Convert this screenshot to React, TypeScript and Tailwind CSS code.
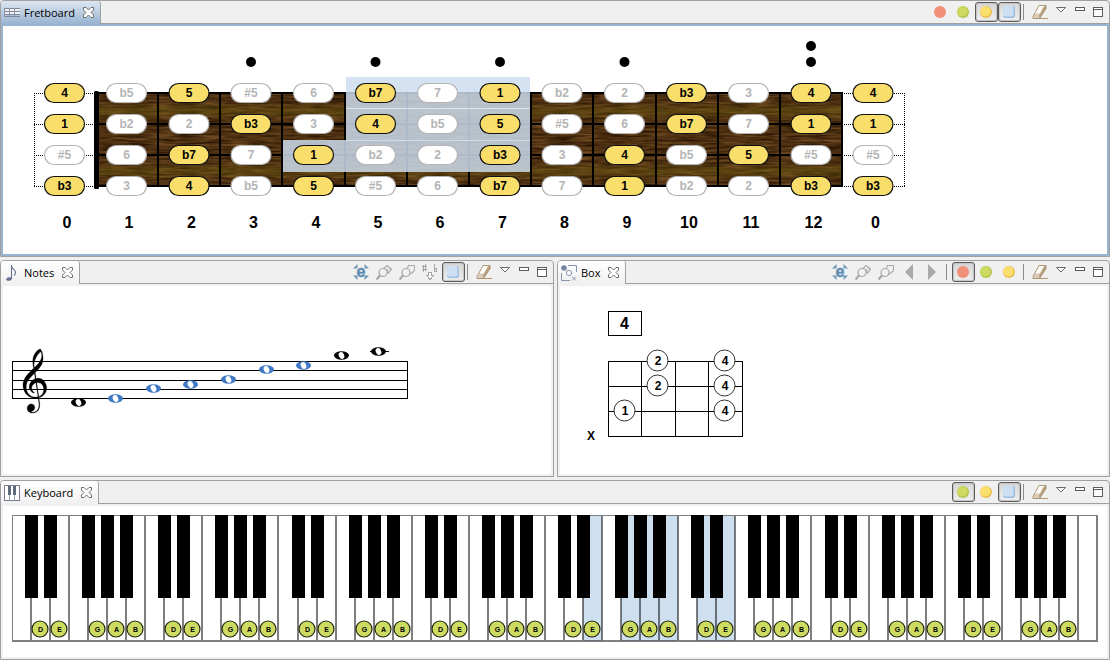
import type { ReactNode } from "react";

/* ---------- icons ---------- */

function Icon({ children, crisp = true }: { children: ReactNode; crisp?: boolean }) {
  return (
    <svg width="16" height="16" viewBox="0 0 16 16" fill="none" aria-hidden="true" shapeRendering={crisp ? "crispEdges" : "auto"} className="shrink-0">
      {children}
    </svg>
  );
}

const RedDot = () => (
  <Icon crisp={false}>
    <circle cx="8" cy="8" r="6" fill="#f09078" />
  </Icon>
);

function ShadedDot({ fill, shade }: { fill: string; shade: string }) {
  return (
    <Icon crisp={false}>
      <circle cx="8" cy="8" r="6" fill={shade} />
      <circle cx="7.4" cy="7.4" r="5.2" fill={fill} />
    </Icon>
  );
}
const GreenDot = () => <ShadedDot fill="#cedb62" shade="#b5c14c" />;
const YellowDot = () => <ShadedDot fill="#fadf6c" shade="#e6bd50" />;

const BlueSquare = () => (
  <Icon crisp={false}>
    <rect x="2" y="2" width="12" height="12" rx="2.5" fill="#9dbfe0" />
    <rect x="2" y="2" width="10.5" height="10.5" rx="2" fill="#cde0f3" />
  </Icon>
);

const Eraser = () => (
  <Icon crisp={false}>
    <path d="M7 1.500h7L9 10.500H3z" fill="#fdfbf6" />
    <path d="M3 9.500h6.500L7.500 14.500H1z" fill="#dccbb8" />
    <path d="M11.500 3 14 1.500V4.500l-6.500 10L7 11.500z" fill="#b8a07e" />
    <path d="M7 1.500h7V4.500L7.500 14.500H1V12.500z" stroke="#a38c6a" strokeWidth=".9" />
    <path d="M6.500 14.500H16" stroke="#b49770" />
  </Icon>
);

const ViewMenu = () => (
  <Icon crisp={false}>
    <path d="M2.500 3.500h9L7 8z" fill="#fff" stroke="#6a6a6a" />
  </Icon>
);
const Minimize = () => (
  <Icon>
    <rect x="3.500" y="3.500" width="9" height="3" fill="#fff" stroke="#5c5c5c" />
  </Icon>
);
const Maximize = () => (
  <Icon>
    <rect x="3.500" y="3.500" width="9" height="9" fill="#fff" stroke="#5c5c5c" />
    <path d="M3 5.500h10" stroke="#5c5c5c" />
  </Icon>
);

const LinkEditor = () => (
  <Icon crisp={false}>
    <path d="M0 4.500 4.500 4.500 4.500 0zM16 4.500h-4.500V0zM0 11.500h4.500V16zM16 11.500h-4.500V16z" fill="#7298b6" />
    <text x="8" y="12.500" textAnchor="middle" fontFamily="Liberation Sans, sans-serif" fontWeight="bold" fontSize="16" fill="#5e8cb2" stroke="#5e8cb2" strokeWidth=".4">e</text>
  </Icon>
);

const SearchKey = () => (
  <Icon crisp={false}>
    <circle cx="7" cy="8.500" r="4" stroke="#a6a6a6" strokeWidth="1.200" />
    <path d="M4 11.500.5 15.500" stroke="#a6a6a6" strokeWidth="2.200" />
    <path d="M8 4.500 11 1.500l4.500 3.500-3 4-1.500-1.500M11.500 2l3 2.500v2M11 5l1.500 2" stroke="#ababab" strokeWidth="1.200" />
  </Icon>
);
const SearchShape = () => (
  <Icon crisp={false}>
    <circle cx="7" cy="8.500" r="4" stroke="#a6a6a6" strokeWidth="1.200" />
    <path d="M4 11.500.5 15.500" stroke="#a6a6a6" strokeWidth="2.200" />
    <path d="M8.500 4 9.500 1.500h6v5l-2.500 2.500-2 1" stroke="#ababab" strokeWidth="1.200" />
  </Icon>
);
const Accidentals = () => (
  <Icon>
    <path d="M1.500 1v7M3.500 0v7M0 2.500h5M0 5.500h5M12.500 0v8M12.500 7.500h2v-3h-2" stroke="#a6a6a6" />
    <path d="M6.500 8.500h3v3h2l-3.500 4-3.500-4h2z" fill="#fff" stroke="#a6a6a6" />
  </Icon>
);
const PrevArrow = () => (
  <Icon crisp={false}>
    <path d="M12 0v16L4 8z" fill="#a9a9a9" />
  </Icon>
);
const NextArrow = () => (
  <Icon crisp={false}>
    <path d="M4 0v16L12 8z" fill="#a9a9a9" />
  </Icon>
);

const FretboardIcon = () => (
  <Icon>
    <path d="M0 3.500h16M0 6.500h16M0 9.500h16M0 11.500h16" stroke="#7f8799" />
    <path d="M.5 3v9M5.500 3v9M10.500 3v9" stroke="#8d93a3" />
    <path d="M1 4h4v2H1zM6 4h4v2H6zM11 4h5v2h-5zM1 7h4v2H1zM6 7h4v2H6zM11 7h5v2h-5z" fill="#eef1f6" />
  </Icon>
);
const NoteIcon = () => (
  <Icon crisp={false}>
    <ellipse cx="5" cy="14" rx="2.800" ry="1.700" fill="#66708f" transform="rotate(-15 5 14)" />
    <path d="M7.500 14V0M7.500 1c.5 3 4 3.500 4 6.500 0 1.300-.5 2.200-1.500 3" stroke="#66708f" strokeWidth="1.100" />
  </Icon>
);
const BoxIcon = () => (
  <Icon crisp={false}>
    <path d="M7 .5h8.500V7M.5 8v7.500H9" stroke="#8a94b0" />
    <circle cx="3" cy="3" r="2.800" fill="#7883a3" />
    <circle cx="8" cy="8" r="2.600" fill="#fff" stroke="#8a94b0" />
    <path d="M5.500 5.500 4 4M11 11.500l4 4M15 11.500l-4 4" stroke="#8a94b0" />
  </Icon>
);
const KeyboardIcon = () => (
  <Icon>
    <rect x=".5" y=".5" width="15" height="15" fill="#fff" stroke="#76818f" />
    <path d="M5.500 10v5M10.500 10v5" stroke="#9aa3af" />
    <path d="M4 1h3v9H4zM9 1h3v9H9z" fill="#5f6b7a" />
  </Icon>
);
const CloseIcon = () => (
  <svg width="11" height="11" viewBox="0 0 11 11" aria-hidden="true">
    <path d="M.5.5H3l2.500 2.500L8 .5h2.500V3L8 5.500 10.500 8v2.500H8L5.500 8 3 10.500H.5V8L3 5.500.5 3z" fill="#fff" stroke="#6d6d6d" />
  </svg>
);

/* ---------- window parts ---------- */

type Tool =
  | { kind: "separator" }
  | { kind: "button"; label: string; icon: ReactNode; pressed?: boolean };

const tool = (label: string, icon: ReactNode, pressed = false): Tool => ({ kind: "button", label, icon, pressed });
const separator: Tool = { kind: "separator" };

function ToolButton({ label, icon, pressed }: { label: string; icon: ReactNode; pressed?: boolean }) {
  return (
    <button
      type="button"
      aria-label={label}
      aria-pressed={pressed}
      className={
        "flex h-5 w-[23px] items-center rounded-[3px] border pl-[2px] " +
        (pressed
          ? "border-[#5a5a5a] bg-linear-to-b from-[#d6d6d6] to-[#efefef] shadow-[inset_0_0_1px_1px_#c4c4c4]"
          : "border-transparent")
      }
    >
      {icon}
    </button>
  );
}

function Panel({ title, icon, tools, active = false, children }: { title: string; icon: ReactNode; tools: Tool[]; active?: boolean; children: ReactNode }) {
  return (
    <section className="min-w-0 overflow-hidden rounded-t-[4px] border border-[#a0a0a0] bg-[#f0f0f0]">
      <header className="flex h-[23px]">
        <div
          className={
            "flex items-center rounded-tr-[3px] border-r border-[#a0a0a0] pr-[6px] pl-[3px] " +
            (active ? "bg-linear-to-b from-[#dde7f2] to-[#99b4d1]" : "bg-linear-to-b from-white to-[#f0f0f0]")
          }
        >
          <button type="button" className="flex items-center gap-1 text-[11px] leading-4 text-black">
            {icon}
            {title}
          </button>
          <button type="button" aria-label={"Close " + title} className="ml-2">
            <CloseIcon />
          </button>
        </div>
        <div className="flex flex-1 items-center justify-end border-b border-[#a0a0a0] pr-[2px]">
          {tools.map((t, i) =>
            t.kind === "separator" ? (
              <span key={i} className="flex w-2 pl-[2px]">
                <span className="h-4 w-px bg-[#8c8c8c]" />
              </span>
            ) : (
              <ToolButton key={i} label={t.label} icon={t.icon} pressed={t.pressed} />
            ),
          )}
          <button type="button" aria-label="View menu" className="flex w-[19px] justify-center"><ViewMenu /></button>
          <button type="button" aria-label="Minimize" className="flex w-[18px] justify-center"><Minimize /></button>
          <button type="button" aria-label="Maximize" className="flex w-[18px] justify-center"><Maximize /></button>
        </div>
      </header>
      <div className={"p-[2px] " + (active ? "bg-[#99b4d1]" : "bg-[#f0f0f0]")}>
        <div className="overflow-hidden bg-white">{children}</div>
      </div>
    </section>
  );
}

/* ---------- fretboard ---------- */

const STRINGS = [
  ["4", "b5", "5", "#5", "6", "b7", "7", "1", "b2", "2", "b3", "3", "4", "4"],
  ["1", "b2", "2", "b3", "3", "4", "b5", "5", "#5", "6", "b7", "7", "1", "1"],
  ["#5", "6", "b7", "7", "1", "b2", "2", "b3", "3", "4", "b5", "5", "#5", "#5"],
  ["b3", "3", "4", "b5", "5", "#5", "6", "b7", "7", "1", "b2", "2", "b3", "b3"],
];
const IN_SCALE = new Set(["1", "b3", "4", "5", "b7"]);
const FRET_STEP = 62.2;
const fretCenter = (i: number) => Math.round((64.5 + FRET_STEP * i) * 2) / 2;
const fretLine = (i: number) => Math.round(95.8 + FRET_STEP * i);
const stringY = (s: number) => 93 + 31 * s;
const INLAYS = [[3, 62], [5, 62], [7, 62], [9, 62], [12, 62], [12, 46]];

function Fretboard() {
  return (
    <svg width="1104" height="228" viewBox="3 26 1104 228" className="block" role="img" aria-label="Fretboard" fontFamily="Liberation Sans, Arial, sans-serif" fontWeight="bold" textAnchor="middle">
      <defs>
        <filter id="grain" x="0" y="0" width="1" height="1" colorInterpolationFilters="sRGB">
          <feTurbulence type="fractalNoise" baseFrequency="0.04 0.45" numOctaves="3" seed="4" />
          <feColorMatrix values=".45 0 0 0 .08  .34 0 0 0 .02  .2 0 0 0 -.03  0 0 0 0 1" />
        </filter>
        <linearGradient id="bands" x1="0" y1="93" x2="0" y2="153" gradientUnits="userSpaceOnUse" spreadMethod="repeat">
          <stop offset="0" stopColor="#6b5a10" stopOpacity="0" />
          <stop offset=".15" stopColor="#6b5a10" stopOpacity="0" />
          <stop offset=".3" stopColor="#6b5a10" stopOpacity=".5" />
          <stop offset=".45" stopColor="#6b5a10" stopOpacity="0" />
          <stop offset="1" stopColor="#6b5a10" stopOpacity="0" />
        </linearGradient>
      </defs>
      <rect x="97" y="93" width="745" height="93" filter="url(#grain)" />
      <rect x="97" y="93" width="745" height="93" fill="url(#bands)" />

      <g shapeRendering="crispEdges">
        {[0, 1, 2, 3].map((s) => (
          <g key={s}>
            <rect x="97" y={stringY(s) - 1} width="746" height={2} />
            <path d={`M34 ${stringY(s) + 0.5}H95M844 ${stringY(s) + 0.5}H905`} stroke="#000" strokeDasharray="1 1" />
          </g>
        ))}
        {Array.from({ length: 12 }, (_, i) => (
          <rect key={i} x={fretLine(i + 1) - 1} y="92" width="2" height="95" />
        ))}
        <path d="M34.500 93V187M904.500 93V187" stroke="#000" strokeDasharray="1 1" />
        <g fill="#cdddee" fillOpacity=".84">
          <rect x="346" y="77" width="184" height="31" />
          <rect x="346" y="109" width="184" height="31" />
          <rect x="283" y="140" width="247" height="32" />
        </g>
        <rect x="346" y="108" width="184" height="1" fill="#dbe6f1" />
        <rect x="346" y="140" width="184" height="1" fill="#cfdce8" />
      </g>
      <rect x="94" y="91" width="5" height="98" rx="1.500" />

      {INLAYS.map(([fret, y]) => (
        <circle key={`${fret}-${y}`} cx={fretCenter(fret)} cy={y} r="5" />
      ))}

      {STRINGS.map((notes, s) =>
        notes.map((note, f) => {
          const on = IN_SCALE.has(note);
          const x = fretCenter(f);
          return (
            <g key={`${s}-${f}`}>
              <rect x={x - 20} y={stringY(s) - 9.5} width="40" height="19" rx="9.500" fill={on ? "#fade6c" : "#fff"} stroke={on ? "#111" : "#b4b4b4"} strokeWidth="1.200" />
              <text x={x} y={stringY(s) + 4} fontSize="12" fill={on ? "#000" : "#b4b4b4"}>{note}</text>
            </g>
          );
        }),
      )}
      {STRINGS[0].map((_, i) => (
        <text key={i} x={fretCenter(i) + 2.5} y="228" fontSize="16">{i === 13 ? 0 : i}</text>
      ))}
    </svg>
  );
}

/* ---------- staff ---------- */

const STAFF_NOTES = [
  { x: 78.5, y: 402.5, on: false },
  { x: 115.5, y: 398.5, on: true },
  { x: 153.5, y: 388.5, on: true },
  { x: 190.5, y: 384.5, on: true },
  { x: 228.5, y: 379.5, on: true },
  { x: 266.5, y: 369.5, on: true },
  { x: 303.5, y: 365.5, on: true },
  { x: 341.5, y: 355.5, on: false },
  { x: 378.5, y: 351.5, on: false },
];

const CLEF =
  "m12.049 3.5296c0.305 3.1263-2.019 5.6563-4.0772 7.7014-0.9349 0.897-0.155 0.148-0.6437 0.594-0.1022-0.479-0.2986-1.731-0.2802-2.11 0.1304-2.6939 2.3198-6.5875 4.2381-8.0236 0.309 0.5767 0.563 0.6231 0.763 1.8382zm0.651 16.142c-1.232-0.906-2.85-1.144-4.3336-0.885-0.1913-1.255-0.3827-2.51-0.574-3.764 2.3506-2.329 4.9066-5.0322 5.0406-8.5394 0.059-2.232-0.276-4.6714-1.678-6.4836-1.7004 0.12823-2.8995 2.156-3.8019 3.4165-1.4889 2.6705-1.1414 5.9169-0.57 8.7965-0.8094 0.952-1.9296 1.743-2.7274 2.734-2.3561 2.308-4.4085 5.43-4.0046 8.878 0.18332 3.334 2.5894 6.434 5.8702 7.227 1.2457 0.315 2.5639 0.346 3.8241 0.099 0.2199 2.25 1.0266 4.629 0.0925 6.813-0.7007 1.598-2.7875 3.004-4.3325 2.192-0.5994-0.316-0.1137-0.051-0.478-0.252 1.0698-0.257 1.9996-1.036 2.26-1.565 0.8378-1.464-0.3998-3.639-2.1554-3.358-2.262 0.046-3.1904 3.14-1.7356 4.685 1.3468 1.52 3.833 1.312 5.4301 0.318 1.8125-1.18 2.0395-3.544 1.8325-5.562-0.07-0.678-0.403-2.67-0.444-3.387 0.697-0.249 0.209-0.059 1.193-0.449 2.66-1.053 4.357-4.259 3.594-7.122-0.318-1.469-1.044-2.914-2.302-3.792zm0.561 5.757c0.214 1.991-1.053 4.321-3.079 4.96-0.136-0.795-0.172-1.011-0.2626-1.475-0.4822-2.46-0.744-4.987-1.116-7.481 1.6246-0.168 3.4576 0.543 4.0226 2.184 0.244 0.577 0.343 1.197 0.435 1.812zm-5.1486 5.196c-2.5441 0.141-4.9995-1.595-5.6343-4.081-0.749-2.153-0.5283-4.63 0.8207-6.504 1.1151-1.702 2.6065-3.105 4.0286-4.543 0.183 1.127 0.366 2.254 0.549 3.382-2.9906 0.782-5.0046 4.725-3.215 7.451 0.5324 0.764 1.9765 2.223 2.7655 1.634-1.102-0.683-2.0033-1.859-1.8095-3.227-0.0821-1.282 1.3699-2.911 2.6513-3.198 0.4384 2.869 0.9413 6.073 1.3797 8.943-0.5054 0.1-1.0211 0.143-1.536 0.143z";

function Staff() {
  return (
    <svg width="548" height="188" viewBox="3 286 548 188" className="block" role="img" aria-label="Notes">
      <path d="M12 361.500H408M12 370.500H408M12 380.500H408M12 389.500H408M12 398.500H408M12.500 361V399M407.500 361V399M370 351.500H389" stroke="#000" fill="none" shapeRendering="crispEdges" />
      <path d={CLEF} transform="translate(23 349) scale(1.560 1.570)" stroke="#000" strokeWidth=".2" />
      {STAFF_NOTES.map(({ x, y, on }) => (
        <g key={x}>
          <ellipse cx={x} cy={y} rx="7.500" ry="4.200" fill={on ? "#3f78c4" : "#000"} />
          <ellipse cx={x} cy={y} rx="2.700" ry="3.500" fill="#fff" transform={`rotate(-24 ${x} ${y})`} />
        </g>
      ))}
    </svg>
  );
}

/* ---------- box diagram ---------- */

const FINGERS = [
  { x: 657.5, y: 360.5, n: 2 },
  { x: 724.5, y: 360.5, n: 4 },
  { x: 657.5, y: 385.5, n: 2 },
  { x: 724.5, y: 385.5, n: 4 },
  { x: 624.5, y: 410.5, n: 1 },
  { x: 724.5, y: 410.5, n: 4 },
];

function BoxDiagram() {
  return (
    <svg width="547" height="188" viewBox="560 286 547 188" className="block" role="img" aria-label="Box" fontFamily="Liberation Sans, Arial, sans-serif" fontWeight="bold" textAnchor="middle">
      <g stroke="#000" fill="none" shapeRendering="crispEdges">
        <rect x="608.500" y="311.500" width="33" height="24" />
        <path d="M608 361.500H743M608 386.500H743M608 411.500H743M608 436.500H743M608.500 361V437M641.500 361V437M675.500 361V437M708.500 361V437M742.500 361V437" />
      </g>
      <text x="624.500" y="329" fontSize="16">4</text>
      {FINGERS.map(({ x, y, n }) => (
        <g key={`${x}-${y}`}>
          <circle cx={x} cy={y} r="10.500" fill="#fff" stroke="#333" />
          <text x={x + 0.5} y={y + 4.5} fontSize="12">{n}</text>
        </g>
      ))}
      <text x="591" y="440" fontSize="12">X</text>
    </svg>
  );
}

/* ---------- keyboard ---------- */

const WHITE_KEYS = 57;
const keyX = (i: number) => Math.round(12 + (1085 / WHITE_KEYS) * i);
const SELECTED_KEYS = [30, 32, 33, 34, 36, 37];
const NOTE_NAMES = ["C", "D", "E", "F", "G", "A", "B"];
const MARKED = new Set(["D", "E", "G", "A", "B"]);

function Keyboard() {
  const keys = Array.from({ length: WHITE_KEYS }, (_, i) => i);
  return (
    <svg viewBox="3 506 1104 151" className="block h-auto w-full" role="img" aria-label="Keyboard" fontFamily="Liberation Sans, Arial, sans-serif" fontWeight="bold" textAnchor="middle">
      <g shapeRendering="crispEdges">
        {SELECTED_KEYS.map((i) => (
          <rect key={i} x={keyX(i)} y="516" width={keyX(i + 1) - keyX(i)} height="125" fill="#cedff0" />
        ))}
        <g fill="#000" fillOpacity=".5">
          <rect x="12" y="515" width="1086" height="1" />
          <rect x="12" y="516" width="1" height="124" />
          <rect x="12" y="640" width="1086" height="2" />
          {keys.map((i) => (
            <rect key={i} x={keyX(i + 1) - 1} y="516" width="2" height="124" />
          ))}
        </g>
        {keys
          .filter((i) => i > 0 && ![0, 3].includes(i % 7))
          .map((i) => (
            <rect key={i} x={keyX(i) - 6} y="515" width="13" height="83" />
          ))}
      </g>
      {keys
        .filter((i) => MARKED.has(NOTE_NAMES[i % 7]))
        .map((i) => (
          <g key={i}>
            <circle cx={keyX(i) + 9} cy="629" r="8" fill="#cedb62" stroke="#23260c" strokeWidth="1.200" />
            <text x={keyX(i) + 9.5} y="632" fontSize="7">{NOTE_NAMES[i % 7]}</text>
          </g>
        ))}
    </svg>
  );
}

/* ---------- page ---------- */

export default function App() {
  return (
    <main className="flex min-h-screen flex-col gap-[3px] bg-[#f0f0f0] font-['Open_Sans','Noto_Sans',sans-serif]">
      <Panel
        title="Fretboard"
        icon={<FretboardIcon />}
        active
        tools={[
          tool("Red layer", <RedDot />),
          tool("Green layer", <GreenDot />),
          tool("Yellow layer", <YellowDot />, true),
          tool("Blue layer", <BlueSquare />, true),
          separator,
          tool("Clear", <Eraser />),
        ]}
      >
        <Fretboard />
      </Panel>

      <div className="grid grid-cols-[554fr_553fr] gap-[3px]">
        <Panel
          title="Notes"
          icon={<NoteIcon />}
          tools={[
            tool("Link with editor", <LinkEditor />),
            tool("Find chord", <SearchKey />),
            tool("Find scale", <SearchShape />),
            tool("Accidentals", <Accidentals />),
            tool("Blue layer", <BlueSquare />, true),
            separator,
            tool("Clear", <Eraser />),
          ]}
        >
          <Staff />
        </Panel>
        <Panel
          title="Box"
          icon={<BoxIcon />}
          tools={[
            tool("Link with editor", <LinkEditor />),
            tool("Find chord", <SearchKey />),
            tool("Find scale", <SearchShape />),
            tool("Previous", <PrevArrow />),
            tool("Next", <NextArrow />),
            separator,
            tool("Red layer", <RedDot />, true),
            tool("Green layer", <GreenDot />),
            tool("Yellow layer", <YellowDot />),
            separator,
            tool("Clear", <Eraser />),
          ]}
        >
          <BoxDiagram />
        </Panel>
      </div>

      <Panel
        title="Keyboard"
        icon={<KeyboardIcon />}
        tools={[
          tool("Green layer", <GreenDot />, true),
          tool("Yellow layer", <YellowDot />),
          tool("Blue layer", <BlueSquare />, true),
          separator,
          tool("Clear", <Eraser />),
        ]}
      >
        <Keyboard />
      </Panel>
    </main>
  );
}
